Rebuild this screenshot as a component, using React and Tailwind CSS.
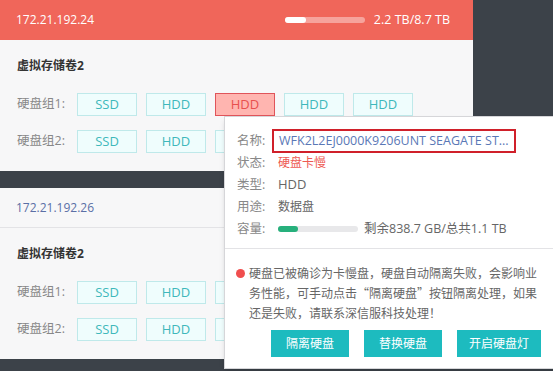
const FONT = { fontFamily: '"Open Sans", "Noto Sans CJK SC", sans-serif' };
const CJK = { fontFamily: '"Noto Sans CJK SC", sans-serif' };

function Chip({ label, bad }) {
  return (
    <div
      className={`w-[60px] h-[23px] flex items-center justify-center text-[13px] border ${
        bad ? 'bg-[#ffb5b0] border-[#e0545a] text-[#e8504e]' : 'bg-[#effdfd] border-[#bfe9ea] text-[#3eb8bb]'
      }`}
    >
      {label}
    </div>
  );
}

function Card({ ip, alert, used }) {
  const groups = [
    ['硬盘组1:', ['SSD', 'HDD', 'HDD', 'HDD', 'HDD']],
    ['硬盘组2:', ['SSD', 'HDD', 'HDD', 'HDD', 'HDD']],
  ];
  return (
    <div className="w-[473px] bg-[#f7f7f8] shrink-0">
      {alert ? (
        <div className="h-10 bg-[#f0665a] flex items-center px-4 text-white text-[12px]">
          <span className="flex-1">{ip}</span>
          <div className="w-20 h-[6px] rounded-full bg-white/40 mr-[9px]">
            <div className="w-[21px] h-[6px] rounded-full bg-white" />
          </div>
          <span className="mr-[7px] text-[12.5px]">{used}</span>
        </div>
      ) : (
        <div className="h-10 border-b border-[#e3e3e6] flex items-center px-4 text-[#5a6fa6] text-[12px]">{ip}</div>
      )}
      <div className="px-[17px] pt-[17px] pb-[18px]">
        <div className="text-[12px] font-bold text-[#333] leading-[18px]">虚拟存储卷2</div>
        <div className="mt-[18px] flex flex-col gap-[14px]">
          {groups.map(([name, chips], gi) => (
            <div key={name} className="flex items-center gap-[9px]">
              <span className="w-[51px] text-[12.5px] text-[#888]">{name}</span>
              {chips.map((c, i) => (
                <Chip key={i} label={c} bad={alert && gi === 0 && i === 2} />
              ))}
            </div>
          ))}
        </div>
      </div>
    </div>
  );
}

function Popover() {
  const rows = [
    ['状态:', <span className="text-[#ee5a52]">硬盘卡慢</span>],
    ['类型:', <span className="text-[13px]">HDD</span>],
    ['用途:', '数据盘'],
  ];
  return (
    <div className="absolute left-[224px] top-[116px] w-[334px] h-[253px] bg-white border border-[#d6d6d9] shadow-md text-[12px]">
      <div className="pl-[12px] pt-[13px] pb-[8px]">
        <div className="flex items-center h-[22px]">
          <span className="w-[41px] text-[#888] text-[12.5px]">名称:</span>
          <div className="h-[24px] border-2 border-[#d0202a] flex items-center px-[5px] text-[#5a78b6] text-[12.5px] -ml-[6px]">
            WFK2L2EJ0000K9206UNT SEAGATE ST...
          </div>
        </div>
        {rows.map(([k, v]) => (
          <div key={k} className="flex items-center h-[22px]">
            <span className="w-[41px] text-[#888] text-[12.5px]">{k}</span>
            <span className="text-[#666]">{v}</span>
          </div>
        ))}
        <div className="flex items-center h-[22px]">
          <span className="w-[41px] text-[#888] text-[12.5px]">容量:</span>
          <div className="w-20 h-[6px] rounded-full bg-[#e8e8ea]">
            <div className="w-5 h-[6px] rounded-full bg-[#27b07c]" />
          </div>
          <span className="ml-[6px] text-[#666] text-[12.5px]">剩余838.7 GB/总共1.1 TB</span>
        </div>
      </div>
      <div className="border-t border-[#e3e3e6] pl-[11px] pt-[14px]">
        <div className="flex items-start">
          <span className="w-[9px] h-[9px] rounded-full bg-[#f04e4e] mt-[6px] shrink-0" />
          <p className="ml-[4px] text-[#666] leading-[20px] whitespace-nowrap" style={CJK}>
            <span className="block">硬盘已被确诊为卡慢盘，硬盘自动隔离失败，会影响业</span>
            <span className="block">务性能，可手动点击“隔离硬盘”按钮隔离处理，如果</span>
            <span className="block">还是失败，请联系深信服科技处理！</span>
          </p>
        </div>
        <div className="flex gap-[15px] ml-[35px] mt-[7px]">
          <button className="w-[78px] h-[27px] bg-[#1dbbbf] text-white text-[12px]">隔离硬盘</button>
          <button className="w-[78px] h-[27px] bg-[#1dbbbf] text-white text-[12px]">替换硬盘</button>
          <button className="w-[84px] h-[27px] bg-[#1dbbbf] text-white text-[12px]">开启硬盘灯</button>
        </div>
      </div>
    </div>
  );
}

export default function App() {
  return (
    <div className="relative w-[553px] h-[371px] overflow-hidden bg-[#3c4249]" style={FONT}>
      <div className="flex flex-col gap-[17px]">
        <Card ip="172.21.192.24" alert used="2.2 TB/8.7 TB" />
        <Card ip="172.21.192.26" />
      </div>
      <Popover />
    </div>
  );
}
